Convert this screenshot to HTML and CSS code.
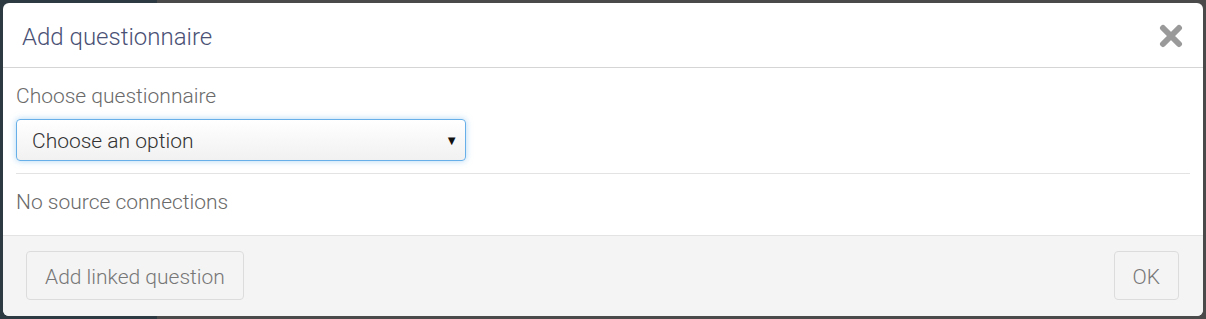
FILE: index.html
```html
<!DOCTYPE html>
<html>
<head>
<meta charset="utf-8">
<link rel="stylesheet" href="styles.css">
</head>
<body>
<div class="modal">
  <div class="modal-header">
    <h4 class="modal-title">Add questionnaire</h4>
    <button class="close" aria-label="Close">
      <svg width="24" height="24" viewBox="0 0 24 24"><path d="M4 4 L20 20 M20 4 L4 20" stroke="#9a9a9a" stroke-width="6" stroke-linecap="round"/></svg>
    </button>
  </div>
  <div class="modal-body">
    <label class="field-label">Choose questionnaire</label>
    <div class="select">
      <span class="select-text">Choose an option</span>
      <span class="select-arrow">▼</span>
    </div>
    <hr class="divider">
    <p class="empty">No source connections</p>
  </div>
  <div class="modal-footer">
    <button class="btn">Add linked question</button>
    <button class="btn">OK</button>
  </div>
</div>
</body>
</html>
```
FILE: styles.css
```css
html, body {
  margin: 0;
  height: 100%;
}
body {
  background: linear-gradient(to right, #2e3a42 0, #2e3a42 157px, #4a4a4a 157px);
  font-family: Roboto, "Noto Sans", sans-serif;
  font-weight: 300;
  padding: 3px;
  box-sizing: border-box;
}
.modal {
  width: 1200px;
  height: 313px;
  background: #fff;
  border-radius: 6px;
  overflow: hidden;
  display: flex;
  flex-direction: column;
}
.modal-header {
  height: 65px;
  box-sizing: border-box;
  border-bottom: 1px solid #d5d5d5;
  display: flex;
  align-items: center;
  justify-content: space-between;
  padding: 0 20px 0 19px;
}
.modal-title {
  margin: 3px 0 0 0;
  font-size: 24px;
  font-weight: 300;
  color: #4a5175;
}
.close {
  background: none;
  border: 0;
  padding: 0;
  display: flex;
  margin-top: 1px;
}
.modal-body {
  flex: 1;
  padding: 15px 13px 0 13px;
}
.field-label {
  display: block;
  font-size: 21px;
  color: #6a6a6a;
  line-height: 26px;
}
.select {
  margin-top: 10px;
  width: 450px;
  height: 42px;
  box-sizing: border-box;
  border: 1px solid #66afe9;
  border-radius: 4px;
  box-shadow: 0 0 6px rgba(102,175,233,0.5);
  background: linear-gradient(#ffffff, #f1f1f1);
  display: flex;
  align-items: center;
  justify-content: space-between;
  padding: 1px 7px 0 15px;
}
.select-text {
  font-size: 21px;
  color: #333;
  font-weight: 300;
}
.select-arrow {
  font-size: 13px;
  color: #111;
  font-family: "DejaVu Sans", sans-serif;
}
.divider {
  border: 0;
  border-top: 1px solid #e3e3e3;
  margin: 12px 0 0 0;
}
.empty {
  margin: 15px 0 0 0;
  font-size: 21px;
  color: #6a6a6a;
  line-height: 26px;
}
.modal-footer {
  height: 81px;
  box-sizing: border-box;
  background: #f4f4f4;
  border-top: 1px solid #e3e3e3;
  display: flex;
  justify-content: space-between;
  align-items: flex-start;
  padding: 15px 24px 0 23px;
}
.btn {
  height: 49px;
  box-sizing: border-box;
  border: 1px solid #dcdcdc;
  border-radius: 4px;
  background: #f4f4f4;
  color: #777;
  font-family: Roboto, "Noto Sans", sans-serif;
  font-weight: 300;
  font-size: 21px;
  padding: 2px 18px 0 18px;
}
```
